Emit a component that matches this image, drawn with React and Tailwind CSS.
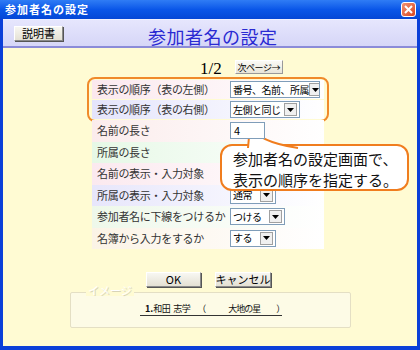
import React from "react";

const jp = { fontFamily: '"Noto Sans CJK JP", "DejaVu Sans", sans-serif' };

const Select = ({ text, w }) => (
  <div
    className="h-[17px] bg-white border border-[#7f9db9] flex items-center justify-between pl-[2px] pr-[2px] text-[10px] text-black overflow-hidden"
    style={{ width: w }}>
    <span className="leading-none tracking-[-0.5px]">{text}</span>
    <span className="shrink-0 w-[13px] h-[13px] bg-[#f0f0f0] border border-[#a0a0a0] flex items-center justify-center">
      <svg width="7" height="4" viewBox="0 0 7 4">
        <path d="M0 0h7L3.5 4z" fill="#000" />
      </svg>
    </span>
  </div>
);

const Row = ({ label, bg, h = "h-[21.5px]", children }) => (
  <div className={`${h} flex items-center pl-[5px] ${bg}`}>
    <span className="w-[133px] shrink-0 text-[11px] text-[#333] leading-none tracking-[-0.3px]">{label}</span>
    {children}
  </div>
);

const Btn = ({ children, w }) => (
  <div
    className={`h-[15px] ${w} bg-gradient-to-b from-[#f8f7f2] to-[#e4e1d4] border border-[#8a8a8a] border-t-white border-l-white shadow-[1px_1px_0_#555] flex items-center justify-center text-[11px] text-black leading-none`}>
    {children}
  </div>
);

export default function App() {
  return (
    <div className="w-[420px] h-[350px] bg-[#0b3fd8] flex flex-col overflow-hidden whitespace-nowrap" style={jp}>
      {/* title bar */}
      <div className="h-[19px] flex items-center justify-between px-[5px] bg-gradient-to-b from-[#2f7cf5] via-[#0a56e8] to-[#0447d6]">
        <span className="text-white font-bold text-[11px] leading-none tracking-[1px]">参加者名の設定</span>
        <span className="w-[15px] h-[15px] mr-[-1px] rounded-[3px] border border-white bg-gradient-to-br from-[#f09070] to-[#d8451c] flex items-center justify-center">
          <svg width="9" height="9" viewBox="0 0 9 9">
            <path d="M1 1L8 8M8 1L1 8" stroke="#fff" strokeWidth="2" />
          </svg>
        </span>
      </div>
      <div className="flex-1 mx-[3px] mb-[4px] flex flex-col bg-[#fffbd3] relative">
        {/* header band */}
        <div className="h-[29px] bg-gradient-to-b from-[#e6e6fd] to-[#d6d6f7] border-t border-[#f0f0ff] border-b-2 border-b-[#8b8bd8] flex items-center relative">
          <div className="ml-[11px]">
            <Btn w="w-[49px]">説明書</Btn>
          </div>
          <span className="absolute left-[145px] top-[3px] text-[18px] text-[#2a2ad2] tracking-[0.5px]">参加者名の設定</span>
        </div>

        {/* page nav */}
        <div className="flex items-end pl-[197px] mt-[12px] h-[17px]">
          <span className="text-[17px] leading-none text-black" style={{ fontFamily: '"Liberation Serif", serif' }}>1/2</span>
          <div className="ml-[13px] mb-[3px]">
            <div className="h-[14px] w-[48px] bg-gradient-to-b from-[#fbfaf6] to-[#e8e5d8] border border-[#999] border-t-white border-l-white flex items-center justify-center text-[9px] leading-none tracking-[-0.5px]">次ページ→</div>
          </div>
        </div>

        {/* settings */}
        <div className="ml-[84px] w-[242px]">
          <div className="border-2 border-[#f08a2a] rounded-[8px] px-[3px] py-[1px] flex flex-col gap-[1px]">
            <Row h="h-[19px]" label="表示の順序（表の左側）" bg="bg-gradient-to-r from-[#fbe8ee] to-white">
              <Select text="番号、名前、所属" w="90px" />
            </Row>
            <Row h="h-[19px]" label="表示の順序（表の右側）" bg="bg-gradient-to-r from-[#e4e4fb] to-white">
              <Select text="左側と同じ" w="70px" />
            </Row>
          </div>
          <div className="px-[5px] mt-[-2px]">
            <Row label="名前の長さ" bg="bg-gradient-to-r from-[#fbecec] to-white">
              <div className="relative z-20 w-[35px] h-[17px] bg-white border border-[#7f9db9] text-[11px] pl-[3px] leading-[15px]">4</div>
            </Row>
            <Row label="所属の長さ" bg="bg-gradient-to-r from-[#e6f8e6] to-white" />
            <Row label="名前の表示・入力対象" bg="bg-gradient-to-r from-[#fbe9ef] to-white" />
            <Row label="所属の表示・入力対象" bg="bg-gradient-to-r from-[#e7e6fb] to-white">
              <Select text="通常" w="46px" />
            </Row>
            <Row label="参加者名に下線をつけるか" bg="bg-gradient-to-r from-[#eef8ea] to-white">
              <Select text="つける" w="55px" />
            </Row>
            <Row label="名簿から入力をするか" bg="bg-gradient-to-r from-[#fbf3e6] to-white">
              <Select text="する" w="46px" />
            </Row>
          </div>
        </div>

        {/* OK / cancel */}
        <div className="flex pl-[143px] gap-[14px] mt-[23px]">
          <Btn w="w-[55px]">OK</Btn>
          <Btn w="w-[56px]">キャンセル</Btn>
        </div>

        {/* image group */}
        <div className="ml-[67px] mt-[5px] w-[281px] h-[36px] border border-[#e4dfc4] rounded-[2px] bg-[#fdfbe6] relative">
          <span className="absolute left-[15px] top-[-8px] px-[2px] bg-[#fffbd3] text-[11px] text-white leading-none [text-shadow:1px_1px_0_#d8d4b8]">イメージ</span>
          <div className="absolute left-[69px] top-[10px] w-[142px] border-b border-[#333] text-[9px] leading-[12px] text-[#111] flex">
            <span className="ml-[5px] font-bold">1.</span>
            <span className="tracking-[-0.5px]">和田</span>
            <span className="ml-[3px] tracking-[-0.5px]">志学</span>
            <span className="ml-[7px]">（</span>
            <span className="ml-[22px] tracking-[-1px]">大地の星</span>
            <span className="ml-[16px]">）</span>
          </div>
        </div>

        {/* callout */}
        <div className="absolute z-10 left-[217px] top-[125px] w-[189px] h-[47px] bg-white border-2 border-[#f07d1e] rounded-[12px] pl-[11px] pt-[2px] text-[15px] leading-[21px] text-[#111]">
          <div>参加者名の設定画面で、</div>
          <div>表示の順序を指定する。</div>
          <svg className="absolute left-[20px] top-[-21px]" width="62" height="24" viewBox="0 0 62 24">
            <path d="M6 23L8 1Q16 17 56 23" fill="#fff" stroke="#f07d1e" strokeWidth="2" strokeLinejoin="miter" />
          </svg>
        </div>
      </div>
    </div>
  );
}
